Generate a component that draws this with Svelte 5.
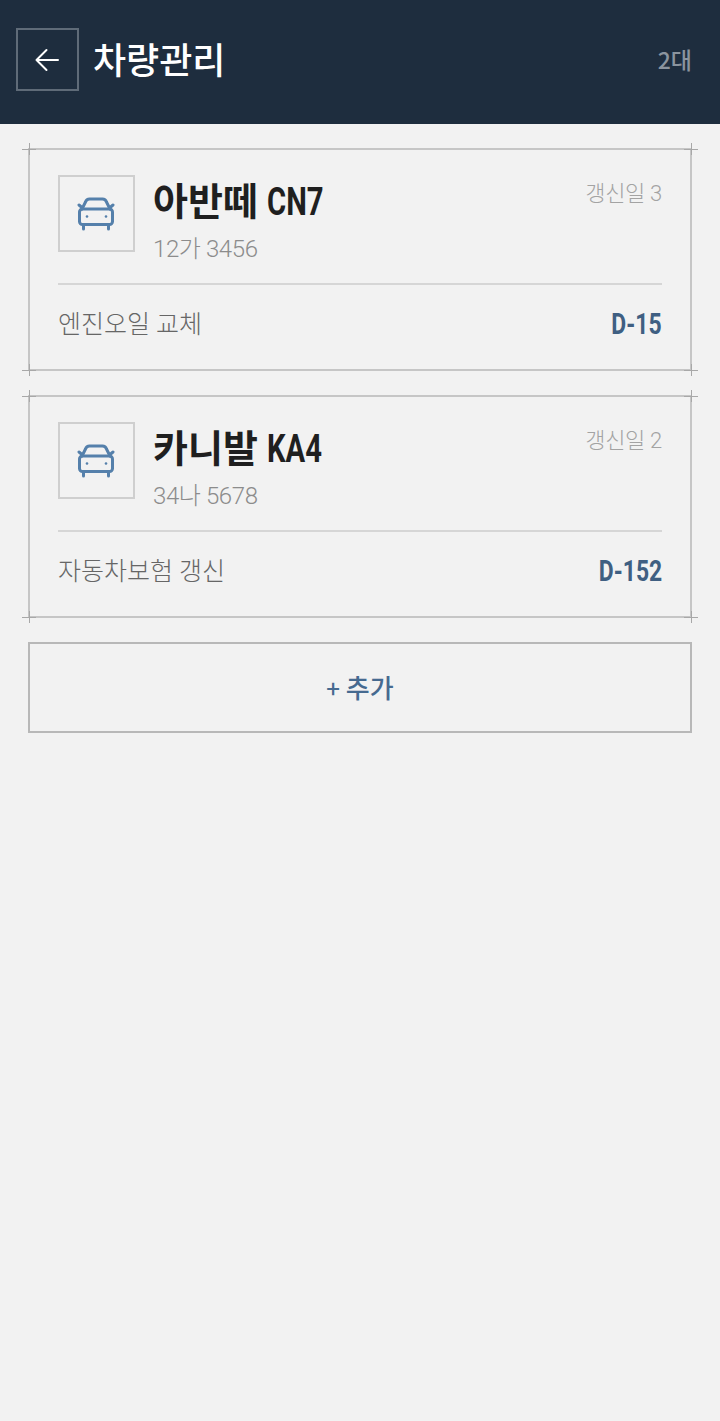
<script lang="ts">
  interface Vehicle {
    id: number
    name: string
    code: string
    plate: string
    renewal: string
    task: string
    due: string
  }

  const vehicles: Vehicle[] = [
    { id: 1, name: '아반떼', code: 'CN7', plate: '12가 3456', renewal: '갱신일 3', task: '엔진오일 교체', due: 'D-15' },
    { id: 2, name: '카니발', code: 'KA4', plate: '34나 5678', renewal: '갱신일 2', task: '자동차보험 갱신', due: 'D-152' },
  ]
</script>

<div class="page">
  <header>
    <button class="back" aria-label="뒤로">
      <svg width="26" height="26" viewBox="0 0 26 26" fill="none" stroke="#fff" stroke-width="2" stroke-linecap="round" stroke-linejoin="round">
        <path d="M24 13H2.500M12.500 3 2.500 13l10 10" />
      </svg>
    </button>
    <h1>차량관리</h1>
    <span class="count">2대</span>
  </header>

  <main>
    {#each vehicles as car (car.id)}
      <section class="card">
        <i class="tick tl"></i><i class="tick tr"></i><i class="tick bl"></i><i class="tick br"></i>
        <div class="top">
          <div class="thumb">
            <svg width="38" height="34" viewBox="0 0 38 34" fill="none" stroke="#5580ab" stroke-width="3" stroke-linecap="round" stroke-linejoin="round">
              <path d="M2 8 5 10.500M36 8 33 10.500" />
              <path d="M5 12 8.500 5Q9.500 2 12.500 2H25.500Q28.500 2 29.500 5L33 12" />
              <rect x="2.500" y="12" width="33" height="15.500" rx="3" />
              <path d="M6.500 27.500v4.500M31.500 27.500v4.500" />
              <circle cx="10" cy="19.500" r="1.300" fill="#5580ab" stroke="none" />
              <circle cx="29" cy="19.500" r="1.300" fill="#5580ab" stroke="none" />
            </svg>
          </div>
          <div class="info">
            <h2>{car.name} <span class="code">{car.code}</span></h2>
            <p class="plate">{car.plate}</p>
          </div>
          <span class="renewal">{car.renewal}</span>
        </div>
        <div class="bottom">
          <span class="task">{car.task}</span>
          <strong class="due">{car.due}</strong>
        </div>
      </section>
    {/each}

    <button class="add"><span class="plus">+</span> 추가</button>
  </main>
</div>

<style>
  :global(body) {
    margin: 0;
    background: #f2f2f2;
  }

  .page {
    min-height: 1421px;
    background: #f2f2f2;
    font-family: Roboto, "Noto Sans CJK KR", sans-serif;
  }

  header {
    height: 124px;
    box-sizing: border-box;
    display: flex;
    align-items: center;
    padding: 0 28px 5px 16px;
    background: #1e2d3e;
  }

  .back {
    width: 63px;
    height: 63px;
    box-sizing: border-box;
    display: flex;
    align-items: center;
    justify-content: center;
    padding: 0 2px 0 0;
    background: none;
    border: 2px solid #5f6b78;
  }

  h1 {
    flex: 1;
    margin: 0 0 3px 14px;
    color: #fff;
    font-size: 36px;
    font-weight: 500;
    line-height: 44px;
    font-family: "Noto Sans CJK KR", sans-serif;
  }

  .count {
    margin-bottom: 2px;
    color: #8b949e;
    font-size: 23px;
    font-weight: 500;
    font-family: "Noto Sans CJK KR", sans-serif;
  }

  main {
    display: flex;
    flex-direction: column;
    gap: 24px;
    padding: 24px 28px 0;
  }

  .card {
    position: relative;
    height: 223px;
    box-sizing: border-box;
    padding: 25px 28px 0;
    border: 2px solid #c6c6c6;
  }

  .tick {
    position: absolute;
    width: 14px;
    height: 12px;
    background:
      linear-gradient(#a8a8a8, #a8a8a8) center / 100% 1px no-repeat,
      linear-gradient(#a8a8a8, #a8a8a8) center / 1px 100% no-repeat;
  }

  .tl { left: -8px; top: -7px; }
  .tr { right: -8px; top: -7px; }
  .bl { left: -8px; bottom: -7px; }
  .br { right: -8px; bottom: -7px; }

  .top {
    display: flex;
    align-items: flex-start;
    height: 108px;
    border-bottom: 2px solid #d6d6d6;
  }

  .thumb {
    width: 77px;
    height: 77px;
    box-sizing: border-box;
    display: flex;
    align-items: center;
    justify-content: center;
    padding: 0 2px 0 0;
    border: 2px solid #cfcfcf;
    flex: none;
  }

  .info {
    flex: 1;
    margin-left: 18px;
  }

  h2 {
    margin: 0;
    color: #1f1f1f;
    font-size: 38px;
    font-weight: 700;
    line-height: 48px;
    font-family: "Noto Sans CJK KR", sans-serif;
  }

  .code {
    display: inline-block;
    font-family: Roboto, sans-serif;
    transform: scaleX(0.77);
    transform-origin: left center;
  }

  .plate {
    margin: 8px 0 0;
    color: #8c8c8c;
    font-size: 24px;
    font-weight: 300;
    letter-spacing: -0.4px;
    line-height: 30px;
  }

  .renewal {
    margin-top: 4px;
    color: #a3a3a3;
    font-size: 22px;
    font-weight: 300;
    letter-spacing: -0.3px;
    line-height: 30px;
  }

  .bottom {
    display: flex;
    align-items: center;
    justify-content: space-between;
    height: 75px;
  }

  .task {
    margin-bottom: 2px;
    color: #666;
    font-size: 25px;
    font-weight: 300;
  }

  .due {
    display: inline-block;
    margin-top: 2px;
    color: #3f5f82;
    font-size: 29px;
    font-weight: 700;
    transform: scaleX(0.79);
    transform-origin: right center;
  }

  .add {
    height: 91px;
    padding: 0 0 2px;
    background: none;
    border: 2px solid #b8b8b8;
    color: #466a90;
    font-size: 26px;
    font-weight: 500;
    font-family: "Noto Sans CJK KR", sans-serif;
  }

  .plus {
    font-size: 24px;
  }
</style>
